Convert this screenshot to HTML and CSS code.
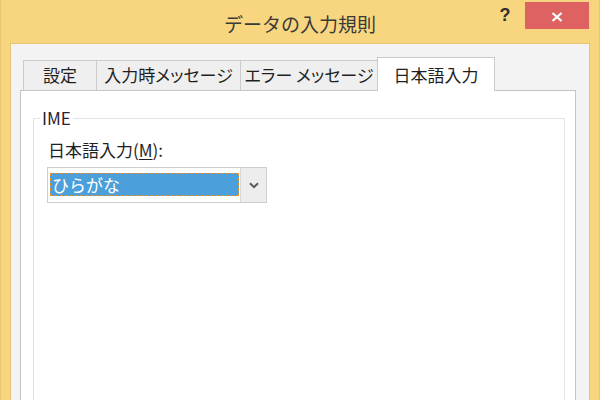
FILE: index.html
```html
<!DOCTYPE html>
<html lang="ja">
<head>
<meta charset="utf-8">
<title>データの入力規則</title>
<link rel="stylesheet" href="styles.css">
</head>
<body>
<div class="window">
  <div class="titlebar">
    <div class="spacer"></div>
    <div class="title">データの入力規則</div>
    <div class="controls">
      <span class="help">?</span>
      <span class="close"><svg width="12" height="10" viewBox="0 0 12 10"><path d="M1.5 1 L10.5 9 M10.5 1 L1.5 9" stroke="#fff" stroke-width="2.2" fill="none"/></svg></span>
    </div>
  </div>
  <div class="client">
    <div class="tabs">
      <div class="tab tab-1">設定</div>
      <div class="tab tab-2">入力時メッセージ</div>
      <div class="tab tab-3">エラー メッセージ</div>
      <div class="tab tab-4 active">日本語入力</div>
    </div>
    <div class="panel">
      <fieldset class="group">
        <legend>IME</legend>
        <label class="field-label">日本語入力(<u>M</u>):</label>
        <div class="combo">
          <div class="combo-value"><span class="sel">ひらがな</span></div>
          <div class="combo-btn"><svg width="10" height="7" viewBox="0 0 10 7"><path d="M1 1.2 L5 5.2 L9 1.2" stroke="#5a5a5a" stroke-width="2" fill="none"/></svg></div>
        </div>
      </fieldset>
    </div>
  </div>
</div>
</body>
</html>
```

FILE: styles.css
```css
html, body {
  margin: 0;
  padding: 0;
}
body {
  width: 600px;
  height: 400px;
  overflow: hidden;
  background: #f8d680;
  font-family: "Noto Sans CJK JP", "Noto Sans", sans-serif;
  color: #1f1f1f;
}
.window {
  height: 400px;
  display: flex;
  flex-direction: column;
  box-sizing: border-box;
  border-left: 1px solid #e9c772;
  border-right: 1px solid #e9c772;
  background: #f8d680;
}
.titlebar {
  height: 43px;
  flex: none;
  display: grid;
  grid-template-columns: 1fr auto 1fr;
  padding: 0 10px;
}
.title {
  font-size: 19px;
  line-height: 40px;
  padding-top: 4px;
  color: #3a3a3a;
  white-space: nowrap;
}
.controls {
  justify-self: end;
  display: flex;
  align-items: flex-start;
}
.help {
  width: 28px;
  height: 27px;
  margin-top: 2px;
  margin-right: 6px;
  font-family: "Liberation Sans", sans-serif;
  font-weight: bold;
  font-size: 18px;
  line-height: 27px;
  text-align: center;
  color: #2e2e2e;
}
.close {
  width: 64px;
  height: 27px;
  margin-top: 2px;
  background: #df6262;
  display: flex;
  align-items: center;
  justify-content: center;
  padding-top: 2px;
  box-sizing: border-box;
}
.client {
  flex: 1;
  margin: 0 9px;
  border: 1px solid #e6c478;
  border-bottom: none;
  background: #f3f3f3;
  padding: 13px 13px 0 9px;
  display: flex;
  flex-direction: column;
  min-height: 0;
}
.tabs {
  display: flex;
  align-items: flex-end;
  padding-left: 3px;
  height: 33px;
  flex: none;
}
.tab {
  height: 30px;
  box-sizing: border-box;
  border: 1px solid #cccccc;
  border-bottom: none;
  background: #efefef;
  font-size: 17px;
  line-height: 28px;
  text-align: center;
  white-space: nowrap;
  font-feature-settings: "palt";
  color: #1f1f1f;
}
.tab + .tab {
  margin-left: -1px;
}
.tab-1 { width: 74px; }
.tab-2 { width: 145px; }
.tab-3 { width: 138px; }
.tab-4 { width: 118px; }
.tab.active {
  height: 34px;
  margin-bottom: -1px;
  background: #fff;
  border-color: #cacaca;
  line-height: 33px;
  position: relative;
  z-index: 1;
}
.panel {
  flex: 1;
  background: #fff;
  border: 1px solid #c4c4c4;
  border-bottom: none;
  padding: 17px 10px 0 12px;
  min-height: 0;
  display: flex;
  flex-direction: column;
}
.group {
  flex: 1;
  min-height: 0;
  margin: 0;
  padding: 0 14px 0 14px;
  border: 1px solid #e2e2e2;
  border-bottom: none;
}
.group legend {
  font-size: 17px;
  line-height: 20px;
  padding: 0 2px;
  margin-left: -8px;
  color: #2a2233;
}
.field-label {
  display: block;
  margin-top: 12px;
  font-size: 17px;
  line-height: 20px;
  color: #1f1f1f;
}
.field-label u {
  text-underline-offset: 2px;
}
.combo {
  margin-top: 7px;
  margin-left: -1px;
  width: 220px;
  height: 36px;
  box-sizing: border-box;
  border: 1px solid #cdcdcd;
  display: flex;
  background: #fff;
}
.combo-value {
  flex: 1;
  padding: 5px 1px 6px 2px;
}
.sel {
  display: block;
  height: 23px;
  background: #4b9fda;
  outline: 1px dashed #e0902e;
  outline-offset: -1px;
  color: #fff;
  font-size: 17px;
  line-height: 23px;
  padding-left: 2px;
}
.combo-btn {
  width: 26px;
  box-sizing: border-box;
  border-left: 1px solid #d8d8d8;
  background: #ededed;
  display: flex;
  align-items: center;
  justify-content: center;
}
```
